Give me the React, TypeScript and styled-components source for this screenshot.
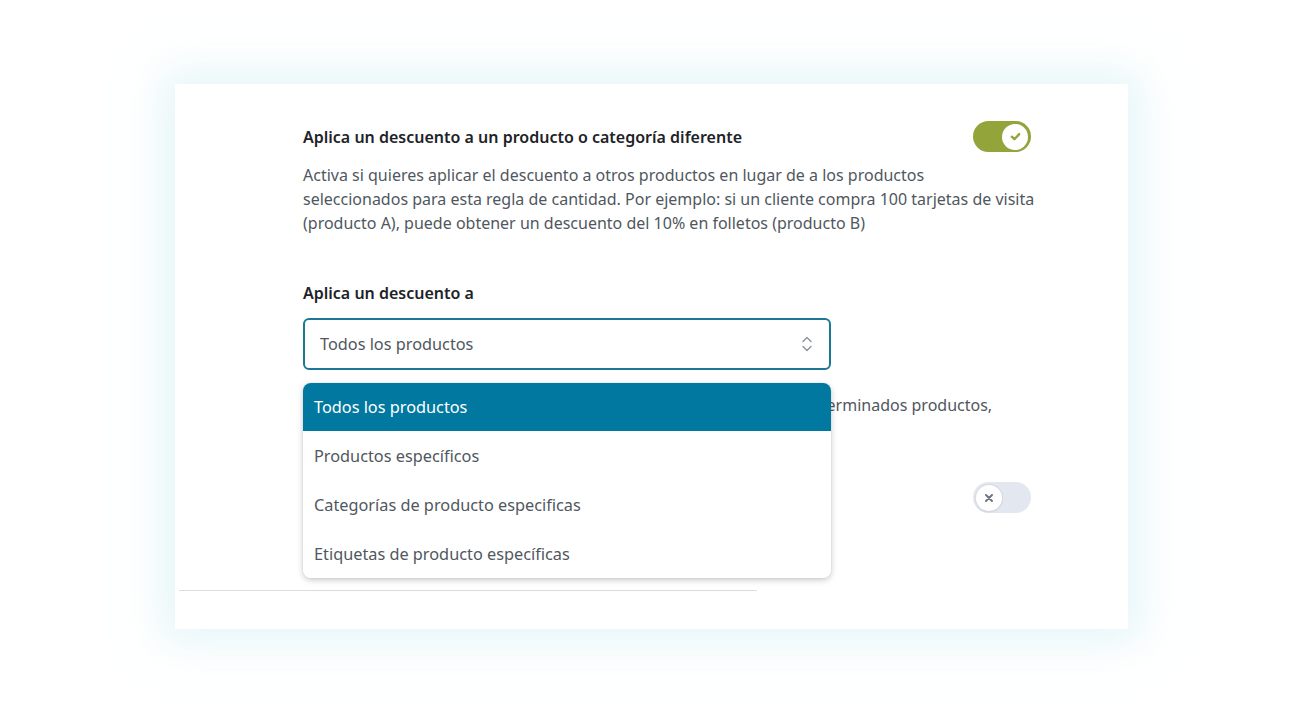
import React from "react";
import styled, { createGlobalStyle } from "styled-components";

const Global = createGlobalStyle`
  html, body { margin: 0; padding: 0; background: #ffffff; }
  * { box-sizing: border-box; }
`;

const Page = styled.div`
  width: 1300px;
  height: 717px;
  padding-top: 84px;
  padding-left: 175px;
  background: #ffffff;
  overflow: hidden;
`;

const Card = styled.div`
  width: 953px;
  height: 545px;
  background: #ffffff;
  box-shadow: 0 0 40px 12px rgba(205, 236, 243, 0.55);
  padding-top: 37px;
  display: flex;
  flex-direction: column;
`;

const Content = styled.div`
  margin-left: 128px;
  width: 760px;
  display: flex;
  flex-direction: column;
  font-family: "Noto Sans", "Open Sans", sans-serif;
`;

const Row = styled.div<{ $mt?: number }>`
  display: flex;
  align-items: center;
  justify-content: space-between;
  width: 728px;
  margin-top: ${(p) => p.$mt ?? 0}px;
`;

const Title = styled.div<{ $mt?: number }>`
  font-size: 16px;
  font-weight: 600;
  color: #1e2327;
  line-height: 24px;
  margin-top: ${(p) => p.$mt ?? 0}px;
`;

const Desc = styled.p<{ $mt?: number }>`
  margin: ${(p) => p.$mt ?? 0}px 0 0 0;
  font-size: 16px;
  line-height: 24px;
  color: #50575e;
  white-space: nowrap;
`;

const Track = styled.div<{ $on: boolean }>`
  width: 58px;
  height: 31px;
  border-radius: 16px;
  background: ${(p) => (p.$on ? "#92a43a" : "#e3e7ef")};
  display: flex;
  align-items: center;
  justify-content: ${(p) => (p.$on ? "flex-end" : "flex-start")};
  padding: 0 3px;
  flex-shrink: 0;
`;

const Knob = styled.div<{ $on: boolean }>`
  width: 26px;
  height: 26px;
  border-radius: 50%;
  background: #ffffff;
  display: flex;
  align-items: center;
  justify-content: center;
  box-shadow: ${(p) => (p.$on ? "none" : "0 0 0 1px #d5dae2, 0 1px 2px rgba(0,0,0,0.12)")};
`;

const SelectWrap = styled.div`
  position: relative;
  width: 528px;
  margin-top: 13px;
`;

const SelectBox = styled.div`
  height: 52px;
  border: 2px solid #1c7796;
  border-radius: 6px;
  display: flex;
  align-items: center;
  justify-content: space-between;
  padding: 0 16px 0 15px;
  font-family: "Noto Sans", sans-serif;
  font-size: 16.3px;
  color: #50575e;
  background: #fff;
`;

const Menu = styled.ul`
  position: absolute;
  top: 65px;
  left: 0;
  width: 528px;
  margin: 0;
  padding: 0;
  list-style: none;
  background: #ffffff;
  border-radius: 8px;
  overflow: hidden;
  box-shadow: 0 2px 6px rgba(0, 0, 0, 0.22), 0 0 1px rgba(0, 0, 0, 0.2);
  z-index: 2;
`;

const Option = styled.li<{ $active?: boolean }>`
  height: ${(p) => (p.$active ? 48 : 49)}px;
  display: flex;
  align-items: center;
  padding-left: 11px;
  font-family: "Noto Sans", sans-serif;
  font-size: 16.3px;
  color: ${(p) => (p.$active ? "#ffffff" : "#50575e")};
  background: ${(p) => (p.$active ? "#00789f" : "#ffffff")};
`;

const Divider = styled.div`
  margin-left: 4px;
  margin-top: 77px;
  width: 578px;
  height: 1px;
  background: #dcdcde;
`;

const Check = () => (
  <svg width="13" height="13" viewBox="0 0 12 12">
    <path d="M2.6 6.2 L5 8.5 L9.4 3.8" fill="none" stroke="#92a43a" strokeWidth="2.2" strokeLinecap="round" strokeLinejoin="round" />
  </svg>
);

const Cross = () => (
  <svg width="10" height="10" viewBox="0 0 10 10">
    <path d="M2 2 L8 8 M8 2 L2 8" fill="none" stroke="#6e7680" strokeWidth="2" strokeLinecap="round" />
  </svg>
);

const Chevrons = () => (
  <svg width="12" height="18" viewBox="0 0 12 18">
    <path d="M2 6.5 L6 2.5 L10 6.5 M2 11.5 L6 15.5 L10 11.5" fill="none" stroke="#8c9399" strokeWidth="1.4" strokeLinecap="round" strokeLinejoin="round" />
  </svg>
);

const Toggle = ({ on }: { on: boolean }) => (
  <Track $on={on}>
    <Knob $on={on}>{on ? <Check /> : <Cross />}</Knob>
  </Track>
);

const options = [
  "Todos los productos",
  "Productos específicos",
  "Categorías de producto especificas",
  "Etiquetas de producto específicas",
];

export default function App() {
  return (
    <>
      <Global />
      <Page>
        <Card>
          <Content>
            <Row>
              <Title>Aplica un descuento a un producto o categoría diferente</Title>
              <Toggle on={true} />
            </Row>
            <Desc $mt={11}>
              Activa si quieres aplicar el descuento a otros productos en lugar de a los productos
              <br />
              seleccionados para esta regla de cantidad. Por ejemplo: si un cliente compra 100 tarjetas de visita
              <br />
              (producto A), puede obtener un descuento del 10% en folletos (producto B)
            </Desc>
            <Title $mt={46}>Aplica un descuento a</Title>
            <SelectWrap>
              <SelectBox>
                <span>Todos los productos</span>
                <Chevrons />
              </SelectBox>
              <Menu>
                {options.map((o, i) => (
                  <Option key={o} $active={i === 0}>
                    {o}
                  </Option>
                ))}
              </Menu>
            </SelectWrap>
            <Desc $mt={23}>
              Elige si quieres aplicar el descuento a todos los productos o solo a determinados productos,
              <br />
              categorías o etiquetas de producto.
            </Desc>
            <Row $mt={41}>
              <Title>Excluir productos</Title>
              <Toggle on={false} />
            </Row>
          </Content>
          <Divider />
        </Card>
      </Page>
    </>
  );
}
